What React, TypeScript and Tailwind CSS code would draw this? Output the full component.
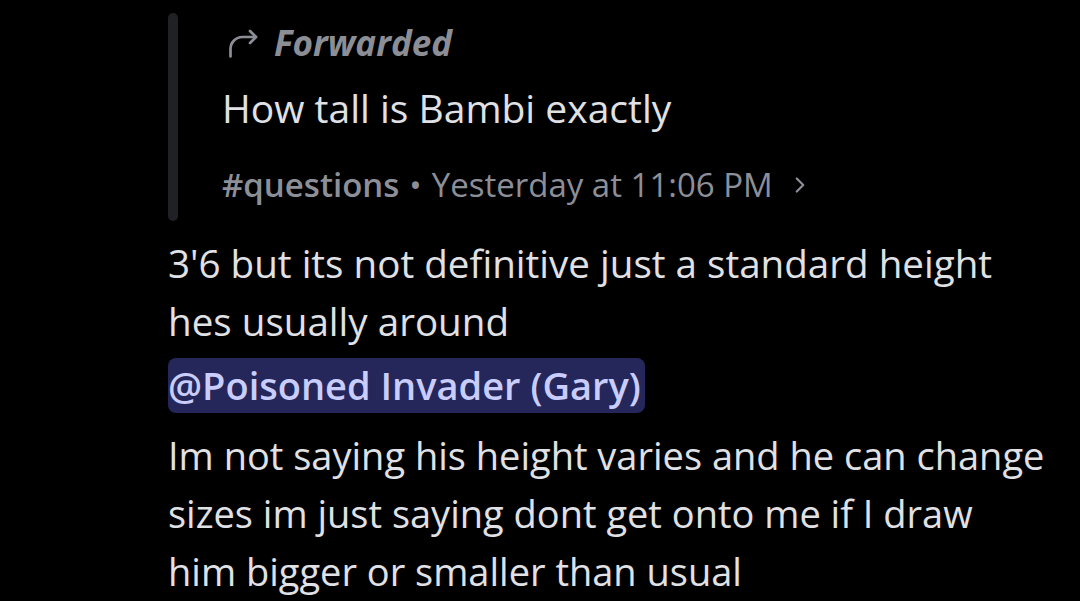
import { ChevronRight } from "lucide-react";

const font = { fontFamily: "'Open Sans', 'Noto Sans', sans-serif" };

const ForwardIcon = () => (
  <svg width="36" height="36" viewBox="0 0 24 24" fill="none" stroke="#8c8e96" strokeWidth="1.8" strokeLinecap="round" strokeLinejoin="round">
    <path d="M3 21v-5a8 8 0 0 1 8-8h9" />
    <path d="M16 4l4 4-4 4" />
  </svg>
);

const App = () => {
  return (
    <div className="w-[1080px] h-[601px] overflow-hidden bg-black pl-[168px] pt-[13px]" style={font}>
      <div className="flex">
        <div className="w-[10px] rounded-full bg-[#202125]" />
        <div className="flex flex-col pl-[44px] pb-[8px]">
          <div className="flex items-center h-[60px] gap-[12px] pl-[4px] text-[#8c8e96]">
            <ForwardIcon />
            <span className="text-[35px] font-bold italic">Forwarded</span>
          </div>
          <div className="h-[70px] leading-[70px] text-[39px] text-[#e0e1e5]">How tall is Bambi exactly</div>
          <div className="mt-[14px] h-[56px] flex items-center text-[33px] text-[#8d8f98]">
            <span className="font-semibold">#questions</span>
            <span className="mx-[10px]">•</span>
            <span>Yesterday at 11:06 PM</span>
            <ChevronRight className="ml-[14px]" size={26} strokeWidth={2} />
          </div>
        </div>
      </div>
      <div className="mt-[13px] text-[38.6px] leading-[58px] text-[#e0e1e5]">
        <div>3'6 but its not definitive just a standard height</div>
        <div>hes usually around</div>
      </div>
      <div className="mt-[8px] flex">
        <span className="h-[55px] leading-[55px] rounded-[8px] bg-[#25275a] pr-[4px] text-[#c9cdfb] text-[38px] font-semibold">
          @Poisoned Invader (Gary)
        </span>
      </div>
      <div className="mt-[13px] text-[38px] leading-[58px] text-[#e0e1e5]">
        <div>Im not saying his height varies and he can change</div>
        <div>sizes im just saying dont get onto me if I draw</div>
        <div>him bigger or smaller than usual</div>
      </div>
    </div>
  );
};

export default App;
